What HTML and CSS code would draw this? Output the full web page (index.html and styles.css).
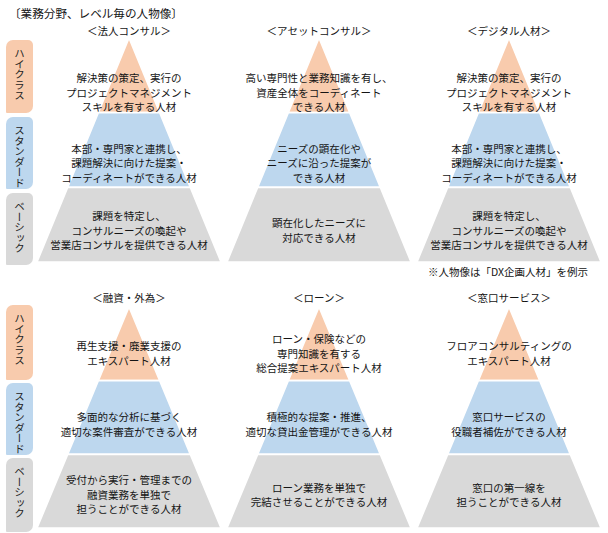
FILE: index.html
```html
<!DOCTYPE html>
<html lang="ja">
<head>
<meta charset="utf-8">
<link rel="stylesheet" href="styles.css">
</head>
<body>
<div class="page">
  <div class="title">〔業務分野、レベル毎の人物像〕</div>

  <div class="row row-top">
    <div class="levels">
      <div class="level high">ハイクラス</div>
      <div class="level std">スタンダード</div>
      <div class="level basic">ベーシック</div>
    </div>
    <div class="cols">
      <div class="col">
        <div class="heading">＜法人コンサル＞</div>
        <div class="pyr">
          <svg class="pyr-bg" viewBox="0 0 184 224" preserveAspectRatio="none"><polygon class="p-high" points="92,0 122.67,74.67 61.33,74.67"/><polygon class="p-std" points="61.33,74.67 122.67,74.67 153.33,149.33 30.67,149.33"/><polygon class="p-basic" points="30.67,149.33 153.33,149.33 184,224 0,224"/></svg>
          <div class="layers">
            <div class="layer l-high">解決策の策定、実行の<br>プロジェクトマネジメント<br>スキルを有する人材</div>
            <div class="layer l-std">本部・専門家と連携し、<br>課題解決に向けた提案・<br>コーディネートができる人材</div>
            <div class="layer l-basic">課題を特定し、<br>コンサルニーズの喚起や<br>営業店コンサルを提供できる人材</div>
          </div>
        </div>
      </div>
      <div class="col">
        <div class="heading">＜アセットコンサル＞</div>
        <div class="pyr">
          <svg class="pyr-bg" viewBox="0 0 184 224" preserveAspectRatio="none"><polygon class="p-high" points="92,0 122.67,74.67 61.33,74.67"/><polygon class="p-std" points="61.33,74.67 122.67,74.67 153.33,149.33 30.67,149.33"/><polygon class="p-basic" points="30.67,149.33 153.33,149.33 184,224 0,224"/></svg>
          <div class="layers">
            <div class="layer l-high">高い専門性と業務知識を有し、<br>資産全体をコーディネート<br>できる人材</div>
            <div class="layer l-std">ニーズの顕在化や<br>ニーズに沿った提案が<br>できる人材</div>
            <div class="layer l-basic">顕在化したニーズに<br>対応できる人材</div>
          </div>
        </div>
      </div>
      <div class="col">
        <div class="heading">＜デジタル人材＞</div>
        <div class="pyr">
          <svg class="pyr-bg" viewBox="0 0 184 224" preserveAspectRatio="none"><polygon class="p-high" points="92,0 122.67,74.67 61.33,74.67"/><polygon class="p-std" points="61.33,74.67 122.67,74.67 153.33,149.33 30.67,149.33"/><polygon class="p-basic" points="30.67,149.33 153.33,149.33 184,224 0,224"/></svg>
          <div class="layers">
            <div class="layer l-high">解決策の策定、実行の<br>プロジェクトマネジメント<br>スキルを有する人材</div>
            <div class="layer l-std">本部・専門家と連携し、<br>課題解決に向けた提案・<br>コーディネートができる人材</div>
            <div class="layer l-basic">課題を特定し、<br>コンサルニーズの喚起や<br>営業店コンサルを提供できる人材</div>
          </div>
        </div>
      </div>
    </div>
  </div>

  <div class="note">※人物像は「DX企画人材」を例示</div>

  <div class="row row-bottom">
    <div class="levels">
      <div class="level high">ハイクラス</div>
      <div class="level std">スタンダード</div>
      <div class="level basic">ベーシック</div>
    </div>
    <div class="cols">
      <div class="col">
        <div class="heading">＜融資・外為＞</div>
        <div class="pyr">
          <svg class="pyr-bg" viewBox="0 0 184 224" preserveAspectRatio="none"><polygon class="p-high" points="92,0 122.67,74.67 61.33,74.67"/><polygon class="p-std" points="61.33,74.67 122.67,74.67 153.33,149.33 30.67,149.33"/><polygon class="p-basic" points="30.67,149.33 153.33,149.33 184,224 0,224"/></svg>
          <div class="layers">
            <div class="layer l-high">再生支援・廃業支援の<br>エキスパート人材</div>
            <div class="layer l-std">多面的な分析に基づく<br>適切な案件審査ができる人材</div>
            <div class="layer l-basic">受付から実行・管理までの<br>融資業務を単独で<br>担うことができる人材</div>
          </div>
        </div>
      </div>
      <div class="col">
        <div class="heading">＜ローン＞</div>
        <div class="pyr">
          <svg class="pyr-bg" viewBox="0 0 184 224" preserveAspectRatio="none"><polygon class="p-high" points="92,0 122.67,74.67 61.33,74.67"/><polygon class="p-std" points="61.33,74.67 122.67,74.67 153.33,149.33 30.67,149.33"/><polygon class="p-basic" points="30.67,149.33 153.33,149.33 184,224 0,224"/></svg>
          <div class="layers">
            <div class="layer l-high">ローン・保険などの<br>専門知識を有する<br>総合提案エキスパート人材</div>
            <div class="layer l-std">積極的な提案・推進、<br>適切な貸出金管理ができる人材</div>
            <div class="layer l-basic">ローン業務を単独で<br>完結させることができる人材</div>
          </div>
        </div>
      </div>
      <div class="col">
        <div class="heading">＜窓口サービス＞</div>
        <div class="pyr">
          <svg class="pyr-bg" viewBox="0 0 184 224" preserveAspectRatio="none"><polygon class="p-high" points="92,0 122.67,74.67 61.33,74.67"/><polygon class="p-std" points="61.33,74.67 122.67,74.67 153.33,149.33 30.67,149.33"/><polygon class="p-basic" points="30.67,149.33 153.33,149.33 184,224 0,224"/></svg>
          <div class="layers">
            <div class="layer l-high">フロアコンサルティングの<br>エキスパート人材</div>
            <div class="layer l-std">窓口サービスの<br>役職者補佐ができる人材</div>
            <div class="layer l-basic">窓口の第一線を<br>担うことができる人材</div>
          </div>
        </div>
      </div>
    </div>
  </div>
</div>
</body>
</html>
```

FILE: styles.css
```css
html, body {
  margin: 0;
  padding: 0;
  background: #ffffff;
}

body {
  font-family: "Noto Sans CJK JP", "Noto Sans", sans-serif;
  color: #141414;
  font-size: 10.5px;
}

.page {
  width: 608px;
  height: 533px;
  padding-top: 6px;
  box-sizing: border-box;
  overflow: hidden;
}

.title {
  font-size: 11.6px;
  line-height: 14px;
  padding-left: 9px;
  white-space: nowrap;
}

.row {
  display: flex;
  gap: 4px;
  padding-left: 6px;
}

.row-top {
  margin-top: 4px;
}

.row-bottom {
  margin-top: 12px;
}

.levels {
  width: 27px;
  display: flex;
  flex-direction: column;
}

.row-top .levels {
  margin-top: 16px;
  gap: 4px;
}

.row-bottom .levels {
  margin-top: 14px;
  gap: 3px;
}

.level {
  writing-mode: vertical-rl;
  text-orientation: upright;
  box-sizing: border-box;
  padding-top: 8px;
  font-size: 10.5px;
  line-height: 27px;
  color: #222222;
  border-radius: 7px 5px 7px 1px;
}

.level.high { background: #f8cbad; }
.level.std { background: #bdd7ee; }
.level.basic { background: #d9d9d9; }

.row-top .level.high { height: 73px; }
.row-top .level.std { height: 72px; }
.row-top .level.basic { height: 72px; }

.row-bottom .level.high { height: 75px; }
.row-bottom .level.std { height: 72px; }
.row-bottom .level.basic { height: 74px; }

.cols {
  display: flex;
  gap: 6px;
}

.col {
  width: 184px;
  display: flex;
  flex-direction: column;
}

.heading {
  text-align: center;
  line-height: 14px;
  height: 14px;
  white-space: nowrap;
}

.row-bottom .heading {
  margin-bottom: 2px;
}

.pyr {
  display: grid;
  height: 224px;
}

.row-bottom .pyr {
  height: 221px;
}

.pyr-bg,
.layers {
  grid-area: 1 / 1;
}

.pyr-bg {
  width: 100%;
  height: 100%;
  display: block;
}

.pyr-bg polygon {
  stroke: #ffffff;
  stroke-width: 1.6;
  vector-effect: non-scaling-stroke;
  stroke-linejoin: miter;
}

.p-high { fill: #f8cbad; }
.p-std { fill: #bdd7ee; }
.p-basic { fill: #d9d9d9; }

.layers {
  display: flex;
  flex-direction: column;
}

.layer {
  flex: 1 1 0;
  display: flex;
  align-items: center;
  justify-content: center;
  text-align: center;
  white-space: nowrap;
  line-height: 14.5px;
  box-sizing: border-box;
}

.row-top .l-high { padding-top: 24px; }
.row-bottom .l-high { padding-top: 14px; }
.row-top .l-std { padding-top: 8px; }
.row-bottom .l-std { padding-top: 5px; }
.l-basic { padding-top: 5px; }

.note {
  text-align: right;
  padding-right: 20px;
  line-height: 14px;
  height: 14px;
  white-space: nowrap;
}
```
